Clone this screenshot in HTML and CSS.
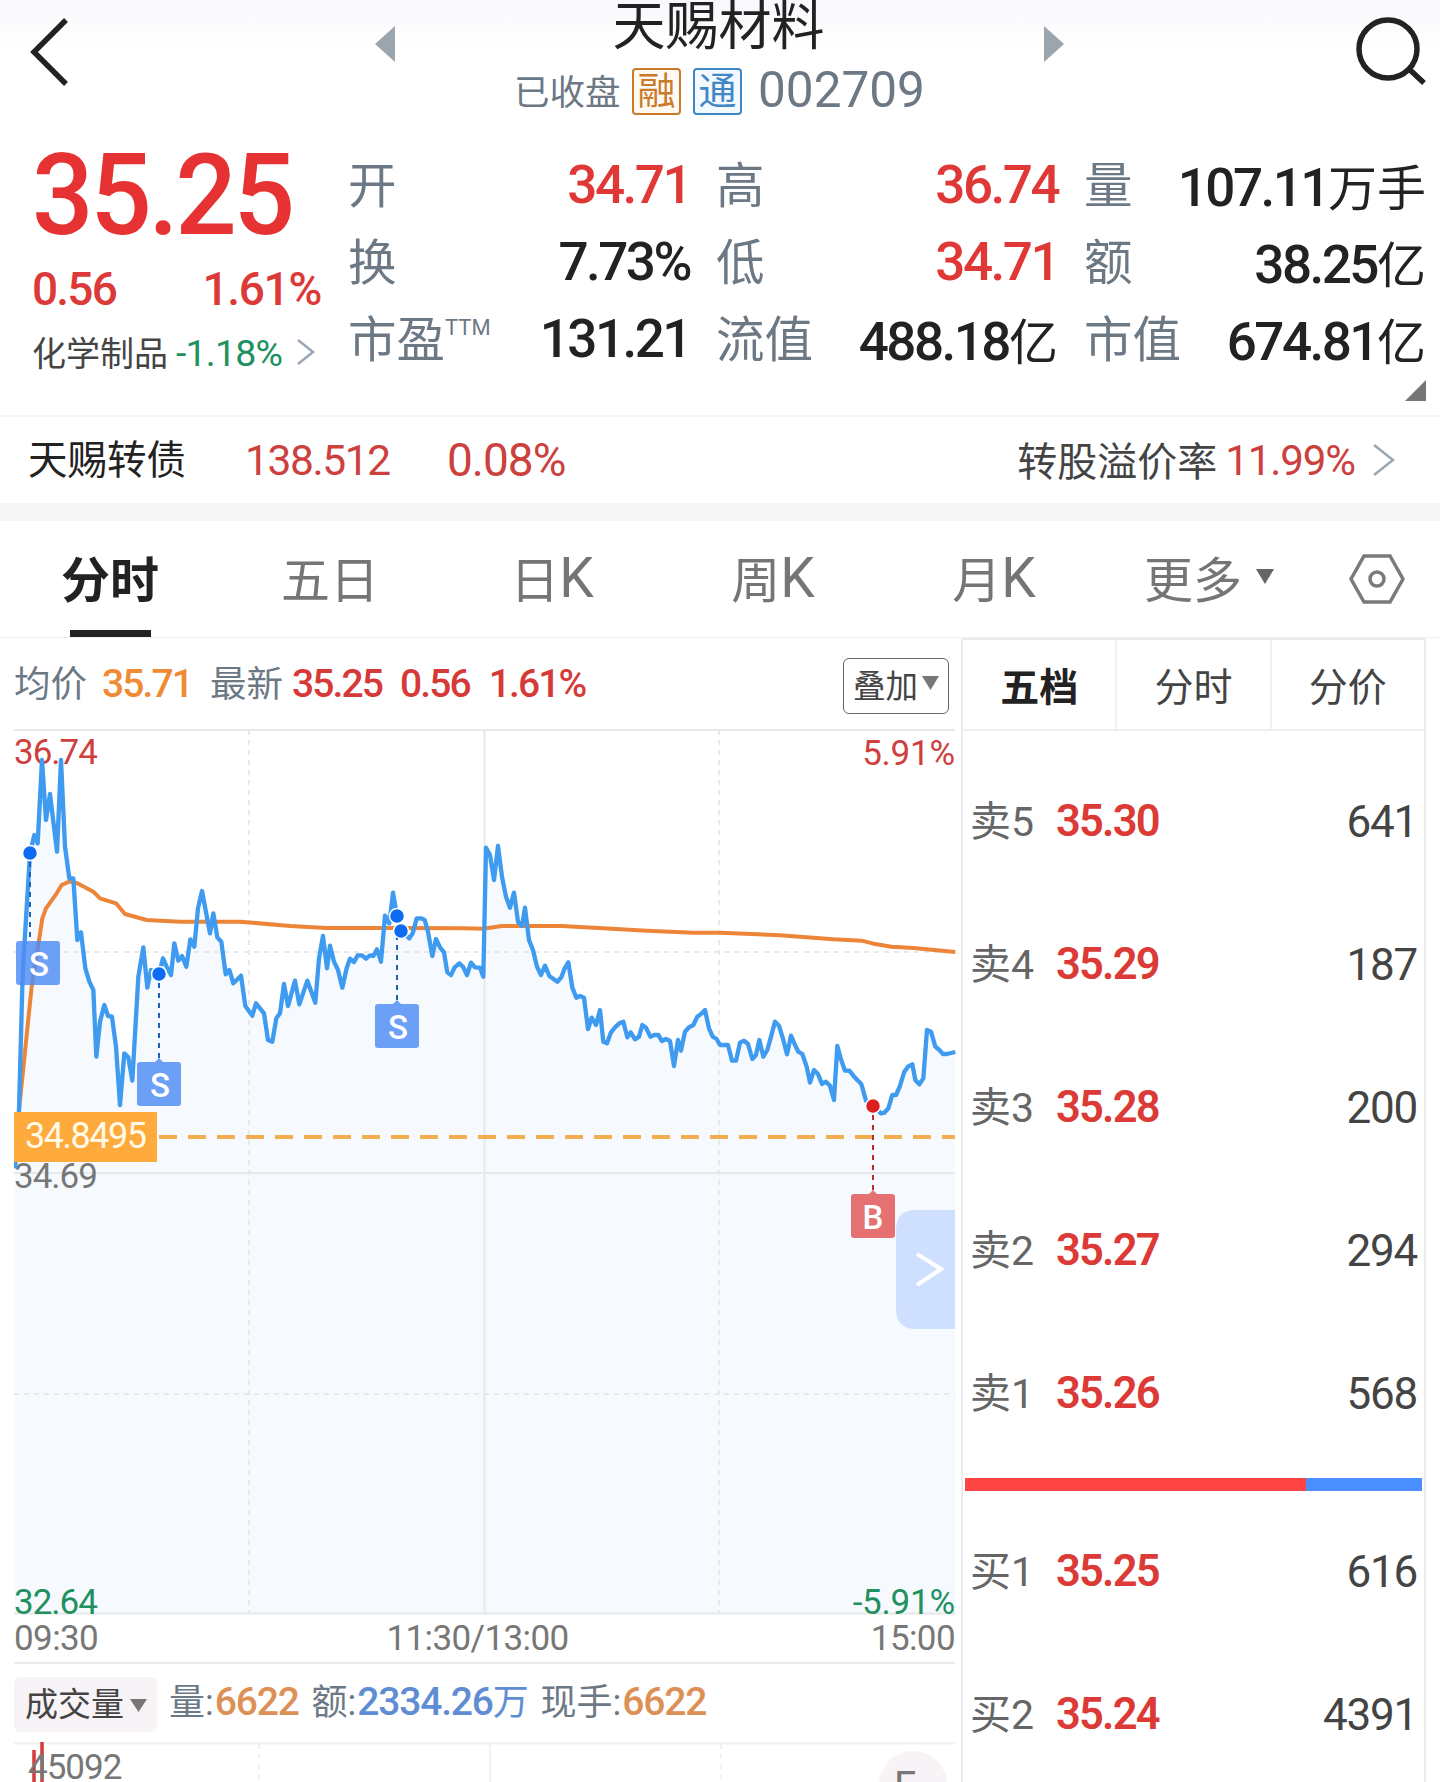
FILE: index.html
```html
<!DOCTYPE html>
<html lang="zh-CN">
<head>
  <meta charset="UTF-8">
  <meta name="viewport" content="width=device-width, initial-scale=1.0">
  <title>天赐材料 002709</title>
  <link rel="stylesheet" href="styles.css">
</head>
<body>
  <header class="header">
    <svg class="back" width="40" height="70" viewBox="0 0 40 70"><path d="M37 3 L5 35 L37 67"/></svg>
    <svg class="prev" width="20" height="36" viewBox="0 0 20 36"><path d="M20 0 V36 L0 18 Z"/></svg>
    <div class="title">
      <h1>天赐材料</h1>
      <div class="subtitle">
        <span class="status">已收盘</span>
        <span class="badge badge-rong">融</span>
        <span class="badge badge-tong">通</span>
        <span class="code">002709</span>
      </div>
    </div>
    <svg class="next" width="20" height="36" viewBox="0 0 20 36"><path d="M0 0 V36 L20 18 Z"/></svg>
    <svg class="search" width="72" height="72" viewBox="0 0 72 72"><circle cx="34" cy="34" r="29"/><path d="M55 54 L70 68"/></svg>
  </header>

  <section class="quote">
    <div class="price-box">
      <div class="price">35.25</div>
      <div class="change"><span>0.56</span><span>1.61%</span></div>
      <div class="industry">
        <span>化学制品</span>
        <span class="industry-change">-1.18%</span>
        <svg class="chevron" width="18" height="26" viewBox="0 0 18 26"><path d="M1 1 L16 13 L1 25"/></svg>
      </div>
    </div>
    <div class="stats">
      <div class="stat"><label>开</label><b class="red">34.71</b></div>
      <div class="stat"><label>高</label><b class="red">36.74</b></div>
      <div class="stat"><label>量</label><b class="unit">107.11<i>万手</i></b></div>
      <div class="stat"><label>换</label><b>7.73%</b></div>
      <div class="stat"><label>低</label><b class="red">34.71</b></div>
      <div class="stat"><label>额</label><b class="unit">38.25<i>亿</i></b></div>
      <div class="stat"><label>市盈<sup>TTM</sup></label><b>131.21</b></div>
      <div class="stat"><label>流值</label><b class="unit">488.18<i>亿</i></b></div>
      <div class="stat"><label>市值</label><b class="unit">674.81<i>亿</i></b></div>
    </div>
    <svg class="corner" width="21" height="21" viewBox="0 0 21 21"><path d="M21 0 V21 H0 Z"/></svg>
  </section>

  <section class="bond">
    <span class="bond-name">天赐转债</span>
    <span class="bond-price">138.512</span>
    <span class="bond-change">0.08%</span>
    <span class="premium-label">转股溢价率</span>
    <span class="premium">11.99%</span>
    <svg class="chevron" width="22" height="32" viewBox="0 0 22 32"><path d="M1 1 L20 16 L1 31"/></svg>
  </section>

  <nav class="tabs">
    <a class="tab active">分时</a>
    <a class="tab">五日</a>
    <a class="tab">日<i>K</i></a>
    <a class="tab">周<i>K</i></a>
    <a class="tab">月<i>K</i></a>
    <a class="tab more">更多<svg width="18" height="15" viewBox="0 0 18 15"><path d="M0 0 H18 L9 15 Z"/></svg></a>
    <svg class="settings" width="56" height="50" viewBox="0 0 56 50"><path d="M15 2 H41 L54 25 L41 48 H15 L2 25 Z"/><circle cx="28" cy="25" r="7"/></svg>
  </nav>

  <main class="main">
    <div class="chart-col">
      <div class="legend">
        <span class="gray">均价</span>
        <b class="avg">35.71</b>
        <span class="gray">最新</span>
        <b class="v-last">35.25</b>
        <b class="v-diff">0.56</b>
        <b>1.61%</b>
        <button class="overlay-btn">叠加<svg width="17" height="14" viewBox="0 0 17 14"><path d="M0 0 H17 L8.500 14 Z"/></svg></button>
      </div>

      <svg class="chart" width="942" height="886" viewBox="14 729 942 886">
        <!-- area, grid, average, price: three units per pixel -->
        <g transform="translate(0 720) scale(0.33333)">
          <path class="area" d="M45 2682 L45 1345 57 1170 68 760 90 400 103 345 113 370 126 120 138 300 150 222 171 395 183 120 195 380 208 475 220 475 232 660 243 637 256 745 268 785 280 810 289 1010 300 905 313 855 324 888 336 890 348 980 360 1155 373 1000 385 1012 397 1082 415 770 430 682 442 803 453 750 477 762 489 715 500 740 513 765 523 670 535 722 546 708 559 740 571 658 583 680 594 565 606 513 630 640 640 580 652 652 664 665 677 763 688 750 700 790 723 767 736 858 757 887 768 850 792 880 804 960 817 965 829 895 840 880 852 792 864 858 885 782 898 853 922 782 946 848 957 715 969 648 981 745 990 677 1002 725 1014 750 1027 803 1040 745 1050 716 1062 726 1073 706 1086 706 1098 716 1110 706 1120 708 1131 688 1143 725 1155 587 1168 610 1179 518 1191 588 1203 633 1228 655 1238 640 1250 595 1263 595 1274 600 1284 635 1297 708 1308 657 1320 682 1332 697 1342 757 1353 765 1364 742 1378 730 1390 742 1401 765 1413 728 1425 742 1440 743 1450 770 1458 383 1470 405 1482 480 1494 378 1506 470 1518 530 1530 563 1542 518 1554 605 1566 618 1575 563 1587 660 1599 690 1611 740 1623 765 1635 737 1648 768 1672 785 1684 772 1694 745 1705 727 1717 803 1729 833 1740 828 1752 833 1764 927 1775 893 1788 915 1800 870 1810 965 1821 970 1833 937 1845 922 1858 910 1870 905 1882 952 1892 937 1905 958 1917 950 1927 915 1938 923 1951 950 1963 945 1975 945 1986 963 1998 957 2010 963 2022 1038 2034 960 2043 992 2055 935 2067 922 2080 915 2092 890 2103 882 2115 870 2127 925 2138 950 2150 957 2160 975 2184 975 2196 1022 2208 1022 2220 968 2232 962 2244 972 2257 1017 2268 1005 2278 960 2290 1010 2302 990 2313 950 2325 905 2337 917 2350 960 2361 1003 2373 947 2385 975 2395 995 2407 1002 2420 1040 2430 1088 2442 1050 2454 1062 2466 1092 2478 1085 2490 1097 2502 1140 2512 978 2523 1018 2535 1052 2548 1052 2560 1067 2572 1080 2584 1092 2598 1142 2619 1158 2643 1180 2653 1178 2665 1165 2677 1125 2688 1125 2700 1098 2713 1055 2724 1040 2737 1033 2746 1080 2758 1093 2770 1075 2781 930 2793 935 2806 980 2818 990 2829 1002 2841 1002 2866 996 L2866 2682 Z"/>
        </g>
        <g class="grid">
          <path d="M14 730 H955 M14 1173 H955 M14 1613.500 H955 M484.500 730 V1614"/>
          <path class="dash" d="M14 952 H955 M14 1394 H955 M249 730 V1614 M719 730 V1614"/>
        </g>
        <g class="axis">
          <text class="up" x="14" y="764">36.74</text>
          <text class="up wide" x="955" y="765" text-anchor="end">5.91%</text>
          <text x="14" y="1188">34.69</text>
          <text class="down" x="14" y="1614">32.64</text>
          <text class="down wide" x="955" y="1614" text-anchor="end">-5.91%</text>
        </g>
        <g transform="translate(0 720) scale(0.33333)">
          <polyline class="avg-line" points="57,1170 95,800 118,655 127,595 138,565 170,520 185,495 208,485 232,490 280,515 300,535 348,550 375,582 440,600 540,605 720,605 870,618 980,624 1190,624 1390,625 1450,626 1505,618 1685,618 1810,625 1940,632 2080,638 2160,638 2340,646 2420,652 2500,658 2585,662 2620,671 2675,680 2740,684 2866,696"/>
          <polyline class="price-line" points="45,1345 57,1170 68,760 90,400 103,345 113,370 126,120 138,300 150,222 171,395 183,120 195,380 208,475 220,475 232,660 243,637 256,745 268,785 280,810 289,1010 300,905 313,855 324,888 336,890 348,980 360,1155 373,1000 385,1012 397,1082 415,770 430,682 442,803 453,750 477,762 489,715 500,740 513,765 523,670 535,722 546,708 559,740 571,658 583,680 594,565 606,513 630,640 640,580 652,652 664,665 677,763 688,750 700,790 723,767 736,858 757,887 768,850 792,880 804,960 817,965 829,895 840,880 852,792 864,858 885,782 898,853 922,782 946,848 957,715 969,648 981,745 990,677 1002,725 1014,750 1027,803 1040,745 1050,716 1062,726 1073,706 1086,706 1098,716 1110,706 1120,708 1131,688 1143,725 1155,587 1168,610 1179,518 1191,588 1203,633 1228,655 1238,640 1250,595 1263,595 1274,600 1284,635 1297,708 1308,657 1320,682 1332,697 1342,757 1353,765 1364,742 1378,730 1390,742 1401,765 1413,728 1425,742 1440,743 1450,770 1458,383 1470,405 1482,480 1494,378 1506,470 1518,530 1530,563 1542,518 1554,605 1566,618 1575,563 1587,660 1599,690 1611,740 1623,765 1635,737 1648,768 1672,785 1684,772 1694,745 1705,727 1717,803 1729,833 1740,828 1752,833 1764,927 1775,893 1788,915 1800,870 1810,965 1821,970 1833,937 1845,922 1858,910 1870,905 1882,952 1892,937 1905,958 1917,950 1927,915 1938,923 1951,950 1963,945 1975,945 1986,963 1998,957 2010,963 2022,1038 2034,960 2043,992 2055,935 2067,922 2080,915 2092,890 2103,882 2115,870 2127,925 2138,950 2150,957 2160,975 2184,975 2196,1022 2208,1022 2220,968 2232,962 2244,972 2257,1017 2268,1005 2278,960 2290,1010 2302,990 2313,950 2325,905 2337,917 2350,960 2361,1003 2373,947 2385,975 2395,995 2407,1002 2420,1040 2430,1088 2442,1050 2454,1062 2466,1092 2478,1085 2490,1097 2502,1140 2512,978 2523,1018 2535,1052 2548,1052 2560,1067 2572,1080 2584,1092 2598,1142 2619,1158 2643,1180 2653,1178 2665,1165 2677,1125 2688,1125 2700,1098 2713,1055 2724,1040 2737,1033 2746,1080 2758,1093 2770,1075 2781,930 2793,935 2806,980 2818,990 2829,1002 2841,1002 2866,996"/>
        </g>
        <!-- cost line -->
        <path class="cost-line" d="M159 1137 H955"/>
        <rect class="cost-box" x="14" y="1112" width="143" height="50"/>
        <text class="cost-text" x="25" y="1148">34.8495</text>
        <!-- trades -->
        <g class="sell">
          <path class="lead" d="M30 862 V938 M159 983 V1060 M397 925 V1002"/>
          <circle cx="30" cy="853" r="7.500"/>
          <circle cx="159" cy="974" r="7.500"/>
          <circle cx="397" cy="916" r="7.500"/>
          <circle cx="401" cy="931" r="7.500"/>
          <rect x="16" y="941" width="44" height="44" rx="3"/>
          <rect x="137" y="1062" width="44" height="44" rx="3"/>
          <rect x="375" y="1004" width="44" height="44" rx="3"/>
          <path class="tip" d="M155 1062 L159 1058 L163 1062 Z M393 1004 L397 1000 L401 1004 Z"/>
          <text x="39" y="976">S</text>
          <text x="160" y="1097">S</text>
          <text x="398" y="1039">S</text>
        </g>
        <path class="drawer" d="M955 1210 H916 Q896 1210 896 1230 V1309 Q896 1329 916 1329 H955 Z"/>
        <path class="drawer-arrow" d="M917 1254 L941 1269 L917 1285"/>
        <g class="buy">
          <path class="lead" d="M873 1115 V1191"/>
          <circle cx="873" cy="1106" r="7.500"/>
          <rect x="851" y="1194" width="44" height="44" rx="3"/>
          <path class="tip" d="M869 1194 L873 1190 L877 1194 Z"/>
          <text x="873" y="1229">B</text>
        </g>
      </svg>

      <div class="times"><span>09:30</span><span class="noon">11:30/13:00</span><span>15:00</span></div>

      <div class="volume-bar">
        <button class="volume-btn">成交量<svg width="17" height="13" viewBox="0 0 17 13"><path d="M0 0 H17 L8.500 13 Z"/></svg></button>
        <span class="item">量:<b class="orange">6622</b></span>
        <span class="item amount">额:<b class="blue">2334.26<i>万</i></b></span>
        <span class="item">现手:<b class="orange">6622</b></span>
      </div>

      <svg class="volume" width="942" height="40" viewBox="14 1742 942 40">
        <path class="vol-grid" d="M14 1743.500 H955 M490 1744 V1782"/>
        <path class="vol-grid dash" d="M259 1744 V1782 M721 1744 V1782"/>
        <path class="vol-red" d="M34 1750 V1782 M42 1742 V1782"/>
        <text x="28" y="1779">45092</text>
        <circle cx="913" cy="1785" r="34"/>
        <text class="f" x="894" y="1800">F</text>
      </svg>
    </div>

    <aside class="book">
      <div class="book-tabs"><a class="active">五档</a><a>分时</a><a>分价</a></div>
      <div class="rows">
        <div class="row"><span>卖5</span><b>35.30</b><em>641</em></div>
        <div class="row"><span>卖4</span><b>35.29</b><em>187</em></div>
        <div class="row"><span>卖3</span><b>35.28</b><em>200</em></div>
        <div class="row"><span>卖2</span><b>35.27</b><em>294</em></div>
        <div class="row"><span>卖1</span><b>35.26</b><em>568</em></div>
      </div>
      <div class="ratio"><div class="ratio-buy" style="width: 74.6%"></div></div>
      <div class="rows">
        <div class="row"><span>买1</span><b>35.25</b><em>616</em></div>
        <div class="row"><span>买2</span><b>35.24</b><em>4391</em></div>
      </div>
    </aside>
  </main>
</body>
</html>
```

FILE: styles.css
```css
* {
  box-sizing: border-box;
}
body {
  margin: 0;
  width: 1440px;
  height: 1782px;
  overflow: hidden;
  background: #fff;
  color: #222;
  font-family: Roboto, "Noto Sans CJK SC", sans-serif;
}
svg {
  display: block;
  flex: none;
}
i, em {
  font-style: normal;
}
span, b, label, a {
  white-space: nowrap;
}
.red {
  color: #e03836;
}

/* header */
.header {
  display: flex;
  align-items: flex-start;
  height: 130px;
  padding: 0 12px 0 29px;
  background: linear-gradient(#f8f8fd, #fff 50px);
}
.back {
  margin-top: 17px;
}
.back path, .search path, .search circle {
  fill: none;
  stroke: #222;
  stroke-width: 5.500;
}
.prev, .next {
  margin-top: 26px;
  fill: #9aa5ad;
}
.prev {
  margin-left: 306px;
}
.title {
  width: 649px;
}
h1 {
  margin: 0;
  font-size: 53px;
  font-weight: 400;
  line-height: 55px;
  text-align: center;
  padding-right: 2px;
}
.subtitle {
  display: flex;
  align-items: center;
  height: 48px;
  margin: 12px 0 0 119px;
}
.status {
  width: 118px;
  margin-top: -4px;
  font-size: 35.500px;
  color: #6c7985;
}
.badge {
  width: 49px;
  height: 47px;
  margin-right: 12px;
  border: 2px solid;
  border-radius: 4px;
  font-size: 38px;
  line-height: 43px;
  text-align: center;
}
.badge-rong {
  color: #c97b2b;
  background: #fefaf2;
}
.badge-tong {
  color: #3f87c5;
  background: #f3f9fe;
}
.code {
  margin: -3px 0 0 4px;
  font-size: 49.500px;
  color: #6c7985;
}
.search {
  margin: 15px 0 0 290px;
}

/* quote */
.quote {
  position: relative;
  display: flex;
  height: 285px;
  padding-left: 32px;
}
.price-box {
  width: 316px;
}
.price {
  height: 128px;
  font-size: 114px;
  font-weight: 500;
  line-height: 130px;
  letter-spacing: -3.500px;
  color: #e63232;
  transform: scaleX(0.95);
  transform-origin: 0 0;
}
.change {
  display: flex;
  justify-content: space-between;
  width: 289px;
  height: 60px;
  font-size: 46px;
  font-weight: 500;
  line-height: 62px;
  letter-spacing: -1.800px;
  color: #db3a38;
}
.change span + span {
  letter-spacing: -1.300px;
}
.industry {
  display: flex;
  align-items: center;
  height: 70px;
  font-size: 34px;
  color: #444;
}
.industry-change {
  margin: 0 15px 0 8px;
  font-size: 37.500px;
  letter-spacing: -0.800px;
  color: #21905f;
}
.industry span:first-child {
  margin-top: -3px;
}
.chevron {
  fill: none;
  stroke: #9ba6b3;
  stroke-width: 2.500;
}
.industry .chevron {
  margin-top: -3px;
}
.stats {
  display: grid;
  grid-template-columns: repeat(3, 342px);
  grid-auto-rows: 77px;
  column-gap: 26px;
  padding-top: 17px;
}
.stat {
  display: flex;
  justify-content: space-between;
  height: 77px;
}
.stat label {
  font-size: 48.500px;
  line-height: 80px;
  color: #6c7985;
}
.stat sup {
  position: relative;
  top: -22px;
  font-size: 22px;
  line-height: 0;
  vertical-align: baseline;
}
.stat b {
  font-size: 53px;
  font-weight: 500;
  line-height: 76px;
  letter-spacing: -2.500px;
}
.stat .unit {
  line-height: 82px;
}
.unit i {
  font-size: 49px;
  font-weight: 400;
  letter-spacing: 0;
}
.corner {
  position: absolute;
  right: 14px;
  bottom: 14px;
  fill: #757575;
}

/* convertible bond */
.bond {
  display: flex;
  align-items: center;
  height: 106px;
  padding: 0 45px 0 28px;
  border-top: 2px solid #f4f4f4;
  border-bottom: 18px solid #f6f6f6;
  color: #cc403e;
}
.bond-name {
  width: 217px;
  margin-top: -8px;
  font-size: 39.500px;
  color: #222;
}
.bond-price {
  width: 202px;
  font-size: 42.500px;
  letter-spacing: -1.400px;
}
.bond-change {
  font-size: 46px;
  letter-spacing: -1px;
}
.premium-label {
  margin: -2px 8px 0 auto;
  font-size: 40px;
  color: #444;
}
.premium {
  margin-right: 18px;
  font-size: 42px;
  letter-spacing: -1.100px;
}

/* period tabs */
.tabs {
  display: flex;
  align-items: center;
  height: 117px;
  border-bottom: 1px solid #f0f0f0;
}
.tab {
  display: flex;
  justify-content: center;
  align-items: center;
  width: 222px;
  height: 116px;
  padding: 0 2px 5px 0;
  font-size: 49px;
  color: #757575;
}
.tab i {
  margin: -4px 0 -6px;
  font-size: 55px;
}
.tab.active {
  position: relative;
  font-weight: 700;
  color: #222;
}
.tab.active::after {
  content: "";
  position: absolute;
  left: 70px;
  bottom: 0;
  width: 81px;
  height: 7px;
  background: #222;
}
.tab:nth-child(2) {
  width: 218px;
}
.tab:nth-child(3) {
  width: 226px;
}
.tab:nth-child(4) {
  width: 216px;
}
.tab:nth-child(5) {
  width: 226px;
}
.more {
  width: 204px;
}
.more svg {
  margin-left: 14px;
  fill: #666;
}
.settings {
  margin-left: 37px;
  fill: none;
  stroke: #7a7a7a;
  stroke-width: 3.500;
}

/* chart */
.main {
  display: flex;
  height: 1144px;
}
.chart-col {
  width: 961px;
  padding-left: 14px;
}
.legend {
  display: flex;
  align-items: center;
  height: 91px;
  font-size: 39px;
  letter-spacing: -1.900px;
  color: #d63a38;
}
.legend b {
  font-weight: 500;
}
.legend .gray {
  margin-top: -4px;
  font-size: 36.500px;
  letter-spacing: 0;
  color: #6c7985;
}
.legend .avg {
  margin: 0 18px 0 15px;
  color: #f08a35;
}
.legend .v-last {
  margin: 0 18px 0 9px;
}
.legend .v-diff {
  margin-right: 19px;
}
.overlay-btn {
  display: flex;
  align-items: center;
  width: 106px;
  height: 56px;
  margin: 4px 12px 0 auto;
  padding: 0 0 5px 9px;
  border: 1.500px solid #666;
  border-radius: 6px;
  background: #fff;
  color: #444;
  font: 32.500px "Noto Sans CJK SC", sans-serif;
}
.overlay-btn svg {
  margin-left: 4px;
  fill: #777;
}
.area {
  fill: #f6faff;
}
.grid path {
  fill: none;
  stroke: #e6e8ea;
  stroke-width: 2;
}
.grid .dash {
  stroke-dasharray: 5 5;
}
.price-line, .avg-line {
  fill: none;
  stroke: #3f9bf0;
  stroke-width: 13;
  stroke-linejoin: round;
}
.avg-line {
  stroke: #ec8538;
  stroke-width: 12;
}
.axis text, .volume text {
  font-size: 35px;
  letter-spacing: -1px;
  fill: #777;
}
.axis .up {
  fill: #cf3f3d;
}
.axis .down {
  fill: #21905f;
}
.axis .wide {
  letter-spacing: -0.200px;
}
.cost-line {
  stroke: #f3ad50;
  stroke-width: 4;
  stroke-dasharray: 18 11;
}
.cost-box {
  fill: #ffaa3c;
}
.cost-text {
  font-size: 36px;
  letter-spacing: -1.500px;
  fill: #fffbe8;
}
.lead {
  fill: none;
  stroke: #1d63b8;
  stroke-width: 2;
  stroke-dasharray: 5 5;
}
.sell circle, .buy circle {
  fill: #0d6af2;
  stroke: #fff;
  stroke-width: 1.500;
}
.sell rect, .sell .tip {
  fill: #4f8df4;
  fill-opacity: 0.83;
}
.sell text, .buy text {
  font-size: 33px;
  font-weight: 500;
  text-anchor: middle;
  fill: #fff;
}
.buy .lead {
  stroke: #b92d2f;
}
.buy circle {
  fill: #dc2020;
}
.buy rect, .buy .tip {
  fill: #e57173;
}
.drawer {
  fill: #cfdfff;
}
.drawer-arrow {
  fill: none;
  stroke: #fff;
  stroke-width: 4;
}
.times {
  display: grid;
  grid-template-columns: 1fr auto 1fr;
  width: 941px;
  height: 49px;
  border-bottom: 2px solid #ebebeb;
  font-size: 35px;
  line-height: 48px;
  letter-spacing: -0.600px;
  color: #777;
}
.times .noon {
  padding-right: 14px;
}
.times span:last-child {
  text-align: right;
}

/* volume */
.volume-bar {
  display: flex;
  align-items: center;
  height: 78px;
  color: #6c7985;
  font-size: 36px;
}
.volume-btn {
  display: flex;
  align-items: center;
  width: 143px;
  height: 55px;
  margin: 3px 12px 0 0;
  padding: 0 0 5px 11px;
  border: none;
  border-radius: 6px;
  background: #f7f3f6;
  color: #444;
  font: 33px "Noto Sans CJK SC", sans-serif;
}
.volume-btn svg {
  margin: 7px 0 0 6px;
  fill: #777;
}
.item {
  margin-right: 13px;
  margin-top: -8px;
}
.item b {
  margin-left: 1px;
  font-size: 39px;
  font-weight: 500;
  letter-spacing: -1.200px;
}
.item i {
  font-size: 36px;
  font-weight: 400;
}
.orange {
  color: #dd9055;
}
.blue {
  color: #5f8dd3;
}
.vol-grid {
  stroke: #f1f1f1;
  stroke-width: 2;
}
.vol-grid.dash {
  stroke-dasharray: 5 5;
}
.vol-red {
  stroke: #d63a3a;
  stroke-width: 3.500;
}
.volume circle {
  fill: #f7f3f6;
}
.volume .f {
  font-size: 40px;
}

/* order book */
.book {
  width: 465px;
  border: 2px solid #ececec;
  border-bottom: none;
}
.book-tabs {
  display: flex;
  height: 91px;
  border-bottom: 2px solid #f0f0f0;
}
.book-tabs a {
  flex: 1;
  font-size: 39px;
  line-height: 96px;
  text-align: center;
  color: #444;
}
.book-tabs a + a {
  border-left: 2px solid #f0f0f0;
}
.book-tabs .active {
  font-weight: 700;
  color: #222;
}
.book-tabs + .rows {
  padding-top: 19px;
}
.row {
  display: flex;
  align-items: center;
  height: 143px;
  padding: 0 7px;
  font-size: 44px;
}
.row span {
  width: 86px;
  margin-top: -7px;
  font-size: 41px;
  color: #666;
}
.row b {
  font-size: 43.500px;
  font-weight: 600;
  letter-spacing: -1.800px;
  color: #db3a36;
}
.row em {
  margin-left: auto;
  letter-spacing: -1.200px;
  color: #444;
}
.ratio {
  height: 13px;
  margin: 13px 2px 9px;
  background: #4a8eff;
}
.ratio-buy {
  height: 13px;
  background: #ff4444;
}
```
